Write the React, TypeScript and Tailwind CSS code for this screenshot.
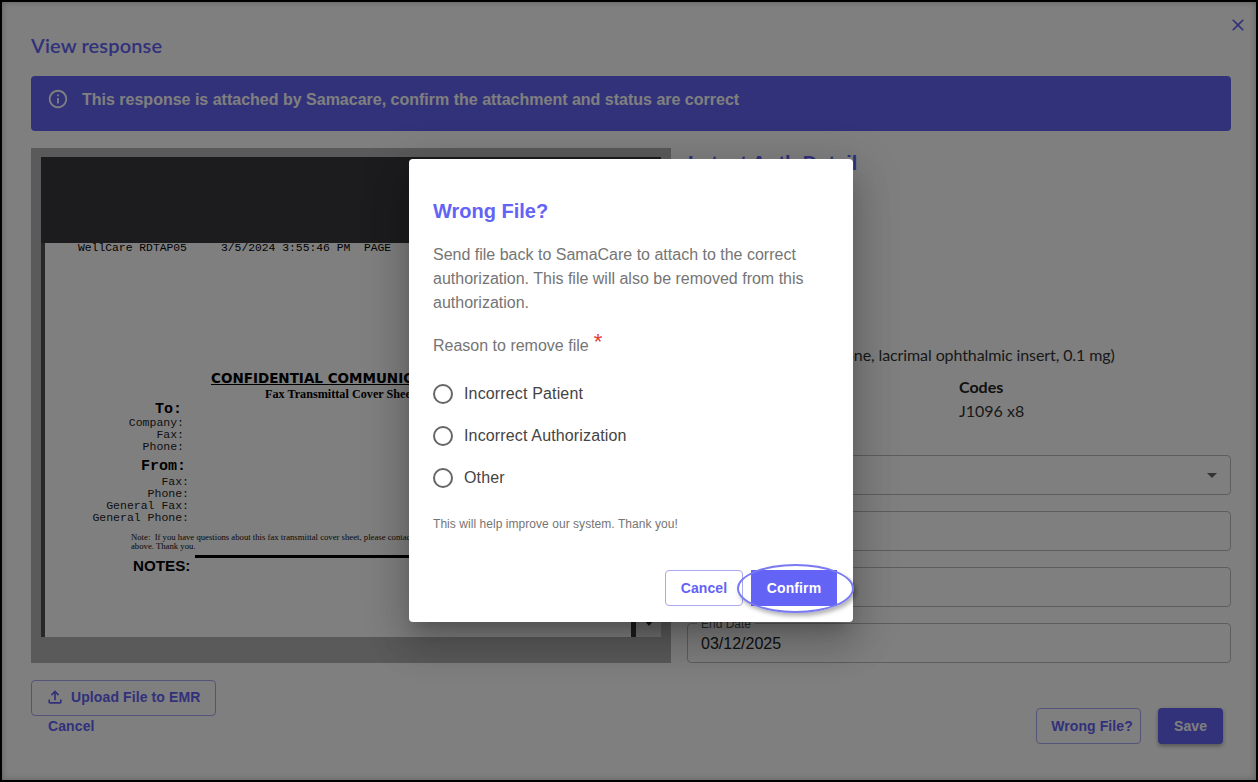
const Sans = "font-['Liberation_Sans',Arial,sans-serif]";

function Field({ label, value, select }: { label?: string; value?: string; select?: boolean }) {
  return (
    <div className="relative h-10 rounded border border-[#bdbdbd] flex items-center justify-between pl-[13px] pr-[6px] text-base text-[#222]">
      {label && <span className="absolute -top-2 left-[9px] bg-white px-1 text-xs leading-4 text-[#555]">{label}</span>}
      {value && <span className="pt-[1px]">{value}</span>}
      {select && (
        <svg viewBox="0 0 24 24" className="ml-auto w-6 h-6 fill-[#666]">
          <path d="M7 10l5 5 5-5z" />
        </svg>
      )}
    </div>
  );
}

function Radio({ label }: { label: string }) {
  return (
    <label className="h-[42px] flex items-center gap-[11px] text-base tracking-[0.15px] text-[#444]">
      <span className="w-5 h-5 rounded-full border-2 border-[#666] shrink-0" />
      <span>{label}</span>
    </label>
  );
}

function FaxLabel({ children, big }: { children: string; big?: boolean }) {
  return big ? (
    <div className="h-[14px] leading-[14px] text-[15px] font-bold text-right">{children}</div>
  ) : (
    <div className="h-3 leading-3 text-[11.5px] text-right text-[#222]">{children}</div>
  );
}

function FaxPage() {
  return (
    <div className="flex-1 bg-white overflow-hidden font-['Liberation_Mono',monospace] text-black">
      <div className="pl-[33px] h-[128px] text-[11.35px] leading-[11px] whitespace-pre">
        WellCare RDTAP05     3/5/2024 3:55:46 PM  PAGE
      </div>
      <div className="pl-[166px] h-[14px] leading-[14px] text-[13.5px] font-bold font-['DejaVu_Sans',sans-serif] underline whitespace-nowrap">
        CONFIDENTIAL COMMUNICATION
      </div>
      <div className="pl-[220px] mt-[3px] h-3 leading-3 text-[12.2px] font-bold font-['Liberation_Serif',serif] whitespace-nowrap">
        Fax Transmittal Cover Sheet
      </div>
      <div className="w-[137px] mt-[3px]">
        <FaxLabel big>To:</FaxLabel>
      </div>
      <div className="w-[139px]">
        <FaxLabel>Company:</FaxLabel>
        <FaxLabel>Fax:</FaxLabel>
        <FaxLabel>Phone:</FaxLabel>
      </div>
      <div className="w-[141px] mt-[7px]">
        <FaxLabel big>From:</FaxLabel>
      </div>
      <div className="w-[144px] mt-[2px]">
        <FaxLabel>Fax:</FaxLabel>
        <FaxLabel>Phone:</FaxLabel>
        <FaxLabel>General Fax:</FaxLabel>
        <FaxLabel>General Phone:</FaxLabel>
      </div>
      <div className="pl-[86px] mt-[9px] text-[8.7px] leading-[9px] font-['Liberation_Serif',serif] text-[#111] whitespace-pre">
        <div>Note:  If you have questions about this fax transmittal cover sheet, please contact</div>
        <div>above. Thank you.</div>
      </div>
      <div className="flex items-start mt-1 font-['Liberation_Sans',sans-serif]">
        <div className="ml-[88px] pt-[1px] text-[15.2px] leading-5 font-bold">NOTES:</div>
        <div className="ml-[5px] flex-1 h-[3px] bg-black" />
      </div>
    </div>
  );
}

export default function App() {
  return (
    <div className={`${Sans} relative w-[1258px] h-[782px] border-2 border-black bg-white overflow-hidden`}>
      <div className="h-full pl-[29px] pr-[25px] pt-[30px] flex flex-col">
        <h1 className="h-7 leading-[26px] text-[20px] tracking-[0.15px] font-semibold text-[#6363f6] font-['Lato',sans-serif]">View response</h1>

        <div className="mt-4 h-[55px] shrink-0 rounded bg-[#6464f4] flex items-start pt-3 pl-4 text-white">
          <svg viewBox="0 0 24 24" className="w-[22px] h-[22px] fill-current shrink-0">
            <path d="M11 7h2v2h-2zm0 4h2v6h-2zm1-9C6.48 2 2 6.48 2 12s4.48 10 10 10 10-4.48 10-10S17.52 2 12 2zm0 18c-4.41 0-8-3.59-8-8s3.59-8 8-8 8 3.59 8 8-3.59 8-8 8z" />
          </svg>
          <p className="ml-[13px] text-base leading-6 font-bold">
            This response is attached by Samacare, confirm the attachment and status are correct
          </p>
        </div>

        <div className="mt-[17px] h-[515px] shrink-0 flex gap-4">
          <div className="w-[640px] shrink-0 bg-[#b4b4b4] pt-[9px] px-[10px] pb-[26px]">
            <div className="h-full flex flex-col">
              <div className="h-[86px] shrink-0 bg-[#38393e]" />
              <div className="flex-1 min-h-0 flex">
                <div className="w-1 bg-[#505050]" />
                <FaxPage />
                <div className="w-[5px] bg-[#383838]" />
                <div className="w-[25px] bg-[#e0e0e0] flex flex-col items-center justify-end pb-[11px]">
                  <div className="w-0 h-0 border-x-[5px] border-x-transparent border-t-[6px] border-t-[#222]" />
                </div>
              </div>
            </div>
          </div>

          <div className="flex-1 flex flex-col">
            <h2 className="pl-[1px] h-7 leading-[31px] text-[20px] font-bold text-[#6363f6]">Latest Auth Detail</h2>
            <p className="mt-[167px] pl-[1px] h-6 leading-6 text-base tracking-[-0.1px] text-[#333] font-['Lato',sans-serif] whitespace-nowrap">
              Dextenza (dexamethasone, lacrimal ophthalmic insert, 0.1 mg)
            </p>
            <div className="mt-2 grid grid-cols-2 font-['Lato',sans-serif] text-base leading-6 text-[#333]">
              <div />
              <div>
                <div className="font-bold text-[#222]">Codes</div>
                <div>J1096 x8</div>
              </div>
            </div>
            <div className="mt-8 flex flex-col gap-4">
              <Field select />
              <Field />
              <Field />
              <Field label="End Date" value="03/12/2025" />
            </div>
          </div>
        </div>

        <div className="mt-[17px] flex justify-between items-start">
          <div className="flex flex-col items-start">
            <button className="w-[185px] h-[36px] rounded border border-[#a9a9f0] flex items-center pl-[13px] pb-[2px] text-sm font-bold tracking-[0.1px] text-[#6363f6]">
              <svg viewBox="0 0 24 24" className="w-[20px] h-[20px] fill-current shrink-0">
                <path d="M18 15v3H6v-3H4v3c0 1.1.9 2 2 2h12c1.1 0 2-.9 2-2v-3h-2zM7 9l1.41 1.41L11 7.83V16h2V7.83l2.59 2.58L17 9l-5-5-5 5z" />
              </svg>
              <span className="ml-[6px]">Upload File to EMR</span>
            </button>
            <button className="ml-[17px] h-5 leading-5 text-sm font-bold tracking-[0.1px] text-[#6363f6]">Cancel</button>
          </div>
          <div className="mt-7 mr-2 flex gap-[17px]">
            <button className="w-[105px] h-9 rounded border border-[#a9a9f0] text-sm font-bold tracking-[0.1px] text-[#6363f6] pl-[7px]">Wrong File?</button>
            <button className="w-[65px] h-9 rounded bg-[#6464f4] text-sm font-bold tracking-[0.1px] text-white shadow-[0_2px_4px_rgba(0,0,0,0.35)]">Save</button>
          </div>
        </div>
      </div>

      <button className="absolute top-[13px] right-[8px] text-[#6363f6]">
        <svg viewBox="0 0 24 24" className="w-5 h-5 fill-current">
          <path d="M19 6.41 17.59 5 12 10.59 6.41 5 5 6.41 10.59 12 5 17.59 6.41 19 12 13.41 17.59 19 19 17.59 13.41 12z" />
        </svg>
      </button>

      <div className="absolute inset-0 bg-[rgba(0,0,0,0.5)] shadow-[inset_0_0_6px_rgba(0,0,0,0.25)]" />

      <div className="absolute left-[407px] top-[157px] w-[444px] h-[463px] rounded bg-white pl-6 pr-4 pt-10 pb-4 flex flex-col shadow-[0_11px_15px_-7px_rgba(0,0,0,0.2),0_24px_38px_3px_rgba(0,0,0,0.14),0_9px_46px_8px_rgba(0,0,0,0.12)]">
        <h2 className="h-6 leading-6 text-[20px] font-bold text-[#6363f6]">Wrong File?</h2>
        <p className="mt-5 pr-2 text-base leading-6 text-[#757575]">
          Send file back to SamaCare to attach to the correct authorization. This file will also be removed from this authorization.
        </p>
        <div className="mt-[19px] h-6 flex text-base leading-6 text-[#757575]">
          <span>Reason to remove file</span>
          <span className="ml-[5px] -mt-[4px] text-[22px] leading-6 text-[#e53935]">*</span>
        </div>
        <div className="mt-[15px] flex flex-col">
          <Radio label="Incorrect Patient" />
          <Radio label="Incorrect Authorization" />
          <Radio label="Other" />
        </div>
        <p className="mt-[17px] h-4 leading-4 text-xs tracking-[0.05px] text-[#757575]">This will help improve our system. Thank you!</p>
        <div className="mt-auto flex justify-end gap-2">
          <button className="w-[78px] h-9 rounded border border-[#a9a9f0] text-sm font-bold tracking-[0.1px] text-[#6363f6]">Cancel</button>
          <button className="w-[86px] h-9 bg-[#6363f6] text-sm font-bold tracking-[0.1px] text-white">Confirm</button>
        </div>
        <div className="absolute left-[328px] top-[405px] w-[117px] h-[49px] rounded-[50%] border-2 border-[#7a7af2] shadow-[2px_3px_4px_rgba(0,0,0,0.3)]" />
      </div>
    </div>
  );
}
